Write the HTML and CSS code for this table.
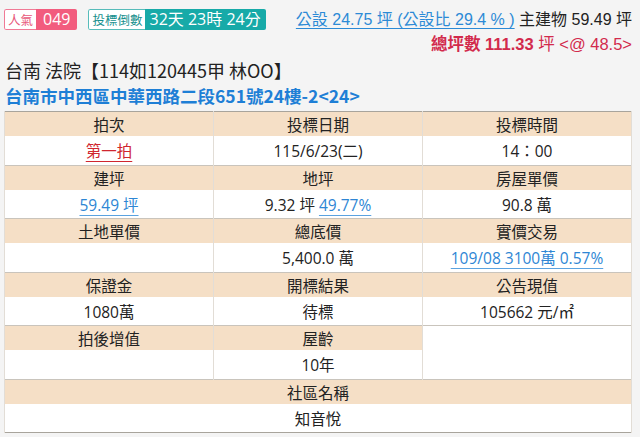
FILE: index.html
```html
<!DOCTYPE html>
<html lang="zh-Hant">
<head>
<meta charset="utf-8">
<link rel="stylesheet" href="styles.css">
</head>
<body>
<div class="page">
  <div class="top">
    <div class="badges">
      <div class="badge pink"><span class="lbl">人氣</span><span class="val">049</span></div>
      <div class="badge teal"><span class="lbl">投標倒數</span><span class="val">32天 23時 24分</span></div>
    </div>
    <div class="area">
      <div class="line1"><a class="link">公設 24.75 坪 (公設比 29.4 % )</a> 主建物 59.49 坪</div>
      <div class="line2"><b>總坪數 111.33</b> 坪 &lt;@ 48.5&gt;</div>
    </div>
  </div>
  <div class="title">台南 法院【114如120445甲 林OO】</div>
  <div class="addr">台南市中西區中華西路二段651號24樓-2&lt;24&gt;</div>
  <table class="info">
    <tr class="h"><td>拍次</td><td>投標日期</td><td>投標時間</td></tr>
    <tr class="d"><td><a class="red">第一拍</a></td><td>115/6/23(二)</td><td>14：00</td></tr>
    <tr class="h"><td>建坪</td><td>地坪</td><td>房屋單價</td></tr>
    <tr class="d"><td><a class="blue">59.49 坪</a></td><td>9.32 坪 <a class="blue">49.77%</a></td><td>90.8 萬</td></tr>
    <tr class="h"><td>土地單價</td><td>總底價</td><td>實價交易</td></tr>
    <tr class="d"><td></td><td>5,400.0 萬</td><td><a class="blue">109/08 3100萬 0.57%</a></td></tr>
    <tr class="h"><td>保證金</td><td>開標結果</td><td>公告現值</td></tr>
    <tr class="d"><td>1080萬</td><td>待標</td><td>105662 元/㎡</td></tr>
    <tr class="h"><td>拍後增值</td><td>屋齡</td><td class="blank" rowspan="2"></td></tr>
    <tr class="d last"><td></td><td>10年</td></tr>
    <tr class="h"><td colspan="3">社區名稱</td></tr>
    <tr class="d"><td colspan="3">知音悅</td></tr>
  </table>
</div>
</body>
</html>
```

FILE: styles.css
```css
html, body {
  margin: 0;
  padding: 0;
  background: #f4f4f4;
}
body {
  font-family: "Open Sans", "Noto Sans CJK TC", sans-serif;
  color: #222;
  width: 640px;
  height: 437px;
  overflow: hidden;
}
.page {
  padding: 0 8px 0 4px;
}
.top {
  display: flex;
  justify-content: space-between;
  align-items: flex-start;
  padding-top: 9px;
}
.badges {
  display: flex;
  gap: 11px;
}
.badge {
  display: flex;
  height: 21px;
  border-radius: 2px;
  overflow: hidden;
  box-sizing: border-box;
}
.badge .lbl {
  background: #fff;
  font-size: 12.5px;
  line-height: 19px;
  padding: 0 3px;
  border: 1px solid;
  border-right: none;
  border-radius: 2px 0 0 2px;
  font-family: "Noto Sans CJK TC", sans-serif;
}
.badge .val {
  color: #fff;
  font-family: "Open Sans", "Noto Sans CJK TC", sans-serif;
  line-height: 21px;
}
.pink .lbl { color: #e8587a; border-color: #f07a95; }
.pink .val { background: #f25c7e; font-size: 16px; padding: 0 7px 0 7px; }
.teal .lbl { color: #178f8d; border-color: #57bcba; }
.teal .val { background: #17aaa8; font-size: 16px; padding: 0 5px 0 4px; }
.area {
  text-align: right;
  font-family: "Liberation Sans", "Noto Sans CJK TC", sans-serif;
  font-size: 16px;
  line-height: 19px;
  padding-top: 1px;
}
.line1 { color: #222; }
.link {
  color: #2c8ad6;
  text-decoration: underline;
  text-underline-offset: 3px;
}
.line2 {
  color: #d22a4c;
  margin-top: 6px;
  font-size: 16.5px;
}
.line2 b { font-weight: bold; }
.title {
  margin-top: 4px;
  font-family: "Noto Sans CJK TC", sans-serif;
  font-size: 18px;
  line-height: 25px;
  color: #222;
  padding-left: 1px;
}
.addr {
  font-family: "Noto Sans CJK TC", sans-serif;
  font-size: 17.5px;
  font-weight: bold;
  line-height: 25px;
  color: #1e7fd6;
  padding-left: 1px;
}
.info {
  width: 628px;
  margin-top: 3px;
  border-collapse: collapse;
  border: 1px solid #a8a49c;
  table-layout: fixed;
  font-size: 15.5px;
  background: #fff;
}
.info td {
  text-align: center;
  padding: 2px 0 0;
  width: 33.33%;
  border-left: 1px solid #e2ddd6;
  border-right: 1px solid #e2ddd6;
}
.info tr.h td {
  background: #f5dfc6;
  line-height: 22px;
  border-top: 1px solid #c9c4bc;
}
.info tr.h:first-child td { border-top: none; }
.info tr.d td {
  background: #fff;
  line-height: 26.5px;
}
.info td.blank {
  background: #fff !important;
  border-top: 1px solid #c9c4bc;
}
.red {
  color: #d0262f;
  text-decoration: underline;
  text-underline-offset: 4px;
  text-decoration-color: #d0262f;
}
.blue {
  color: #2e86d4;
  text-decoration: underline;
  text-underline-offset: 4px;
  text-decoration-color: #5aa2e0;
}
```
